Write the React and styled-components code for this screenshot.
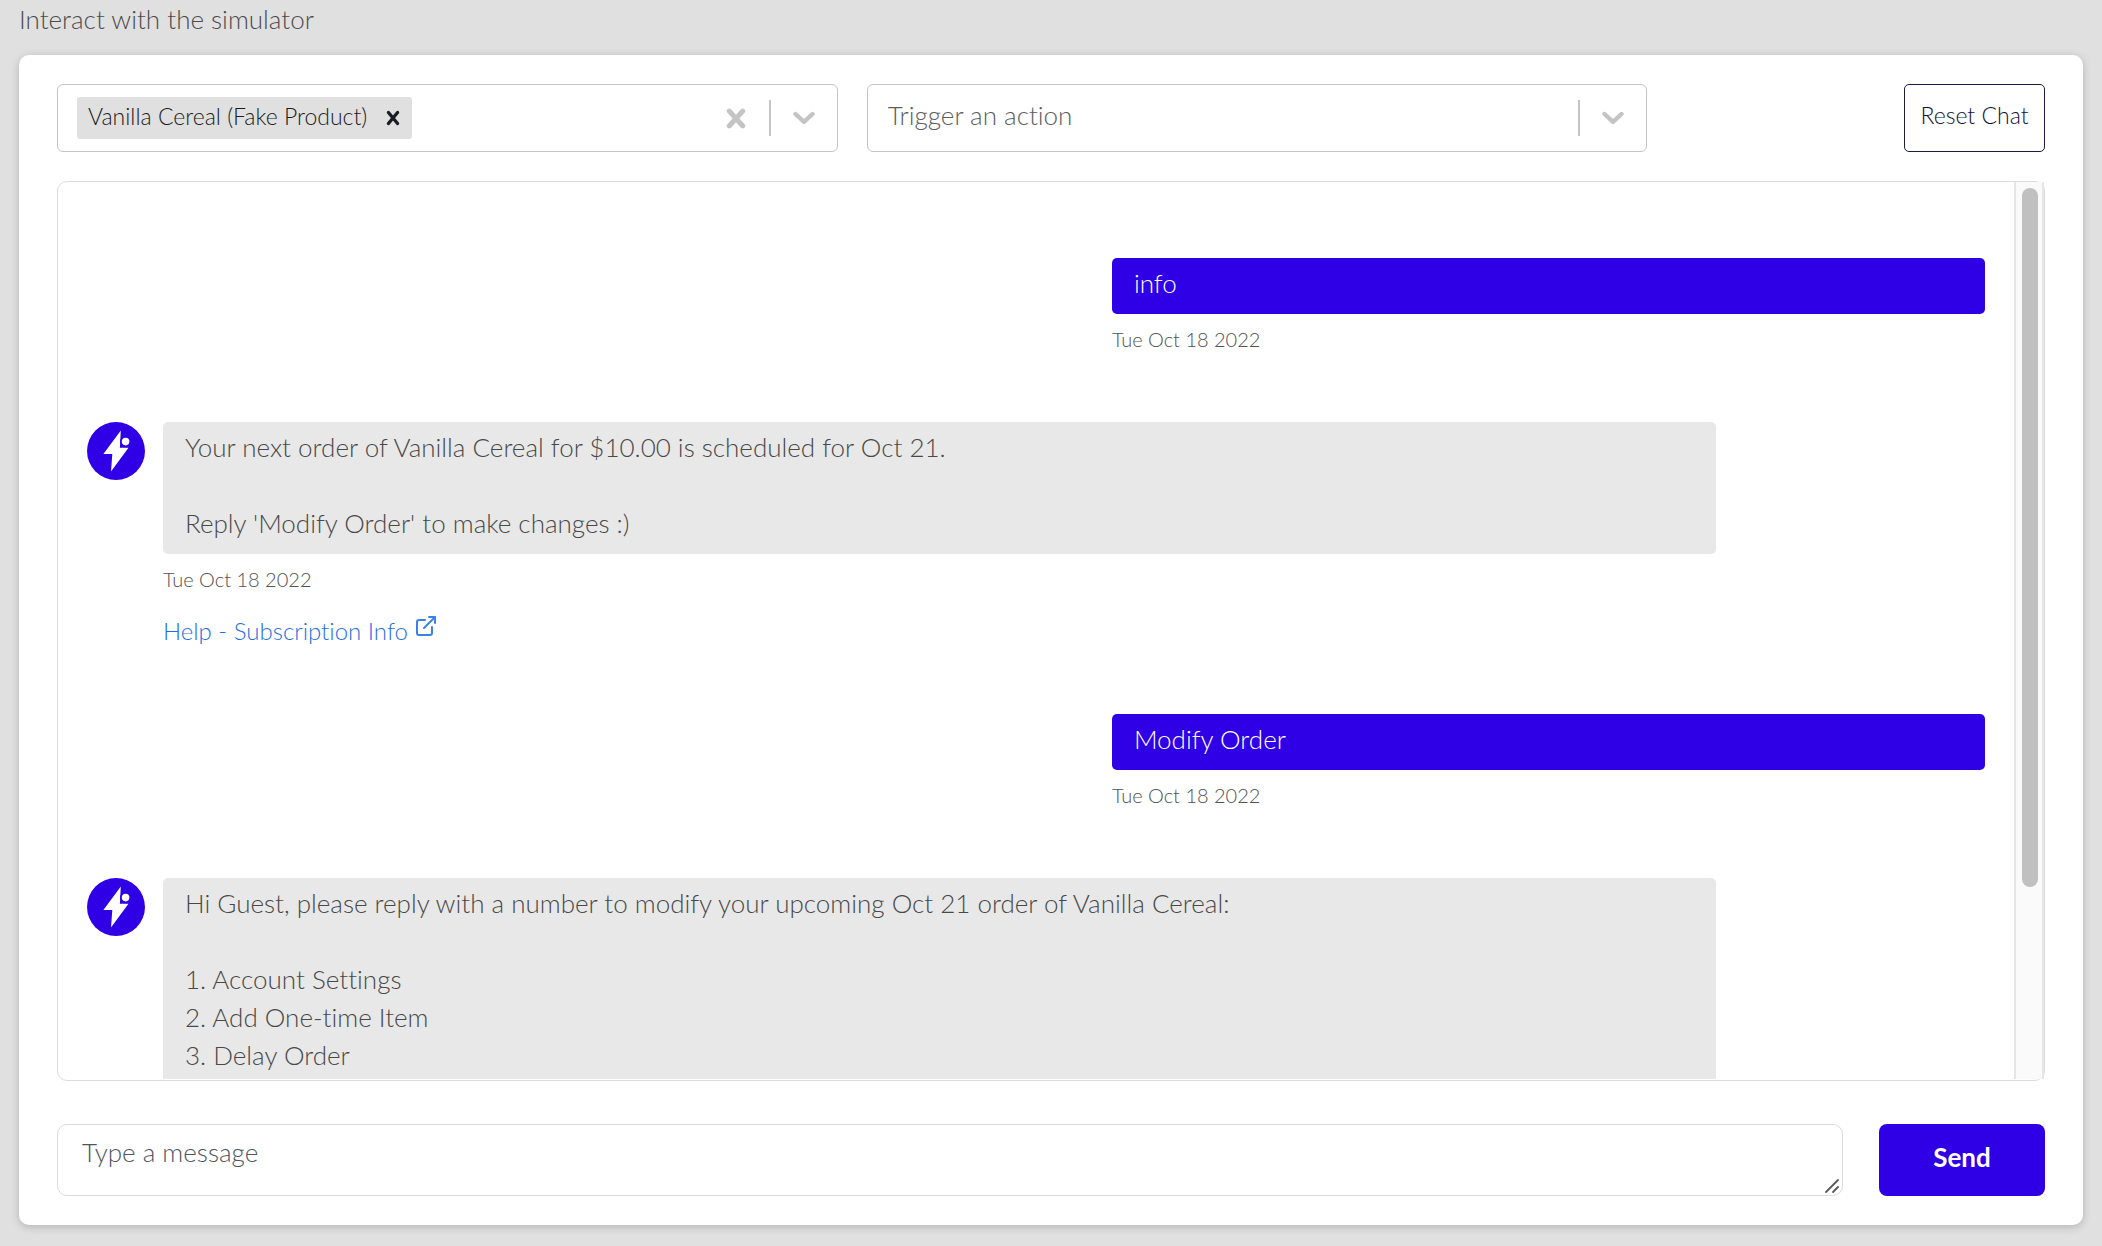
import React from 'react';
import styled, { createGlobalStyle } from 'styled-components';
import { ExternalLink } from 'lucide-react';

const brand = '#2f00e6';
const line = '#dcdce0';
const control = '#c4c4c4';

const GlobalStyle = createGlobalStyle`
  *, *::before, *::after { box-sizing: border-box; }
  body {
    margin: 0;
    background: #e0e0e0;
    color: #484848;
    font: 300 26px/38px Lato, "Open Sans", sans-serif;
    font-variant-ligatures: none;
  }
  button, input, select, textarea { font: inherit; color: inherit; margin: 0; }
`;

const Page = styled.main`
  display: flex;
  flex-direction: column;
  height: 100vh;
  min-height: 640px;
  padding: 0 19px 21px;
`;

const Title = styled.h1`
  margin: 0 0 17px;
  font-size: 26px;
  font-weight: 300;
  color: #4c4c4c;
`;

const Card = styled.section`
  display: flex;
  flex: 1;
  flex-direction: column;
  min-height: 0;
  padding: 29px 38px;
  border-radius: 10px;
  background: #fff;
  box-shadow: 0 2px 8px rgba(0, 0, 0, 0.2);
`;

const Toolbar = styled.div`
  display: flex;
  justify-content: space-between;
  height: 68px;
  margin-bottom: 29px;
`;

const Filters = styled.div`
  display: grid;
  grid-template-columns: 1fr 1fr;
  gap: 29px;
  width: 80%;
`;

const Picker = styled.div`
  display: flex;
  align-items: center;
  border: 1px solid ${control};
  border-radius: 6px;
  background: #fff;
`;

const Tag = styled.span`
  display: flex;
  align-items: center;
  height: 42px;
  margin-left: 19px;
  padding-left: 11px;
  border-radius: 3px;
  background: #e0e0e0;
  color: #1c1c1c;
  font-size: 23px;
`;

const TagText = styled.span`
  padding: 0 6px 4px 0;
`;

const IconButton = styled.button`
  display: flex;
  align-items: center;
  justify-content: center;
  width: ${(p) => (p.$small ? 39 : 66)}px;
  height: 42px;
  padding: 0;
  border: 0;
  background: none;
  color: ${(p) => (p.$small ? '#1c1c24' : control)};
`;

const SearchInput = styled.input`
  flex: 1;
  min-width: 0;
  border: 0;
  outline: 0;
  background: none;
`;

const Separator = styled.span`
  width: 2px;
  height: 36px;
  background: ${control};
`;

const ActionSelect = styled.select`
  flex: 1;
  min-width: 0;
  height: 100%;
  padding: 0 20px 6px;
  border: 0;
  outline: 0;
  appearance: none;
  background: none;
  color: #5c5c5c;
`;

const ResetButton = styled.button`
  width: 141px;
  padding: 0 0 6px;
  border: 1px solid #1d1b42;
  border-radius: 5px;
  background: #fff;
  color: #12103a;
  font-size: 23px;
`;

const Chat = styled.div`
  display: flex;
  flex: 1;
  min-height: 0;
  margin-bottom: 43px;
  padding-bottom: 1px;
  border: 1px solid ${line};
  border-radius: 10px;
`;

const Messages = styled.div`
  flex: 1;
  padding: 76px 29px 64px;
  overflow-y: auto;
  scrollbar-width: none;
`;

const ScrollTrack = styled.div`
  width: 30px;
  padding: 6px;
  border: solid #e6e6e6;
  border-width: 0 2px;
  background: #fafafa;
`;

const ScrollThumb = styled.div`
  width: 16px;
  height: 79%;
  border-radius: 8px;
  background: #c0c0c0;
`;

const UserRow = styled.article`
  width: 46%;
  margin: 0 0 64px auto;
`;

const BotRow = styled.article`
  display: flex;
  gap: 18px;
  margin-bottom: 64px;
  padding-right: 269px;
`;

const BotBody = styled.div`
  flex: 1;
  min-width: 0;
`;

const Bubble = styled.div`
  min-height: 56px;
  padding: 6px 22px 12px;
  border-radius: 5px;
  background: ${(p) => (p.$user ? brand : '#e8e8e8')};
  color: ${(p) => (p.$user ? '#fff' : '#484848')};
  white-space: pre-line;
`;

const Stamp = styled.time`
  display: block;
  margin-top: 6px;
  color: #525252;
  font-size: 20px;
`;

const HelpLink = styled.a`
  display: inline-flex;
  align-items: flex-start;
  gap: 6px;
  margin-top: 14px;
  color: #1f6fe0;
  font-size: 24px;
  text-decoration: none;
  vertical-align: top;

  svg { margin-top: 2px; color: #3b82e6; }
`;

const Composer = styled.form`
  display: flex;
  gap: 36px;
  height: 72px;
`;

const Field = styled.div`
  position: relative;
  flex: 1;
  min-width: 0;
`;

const MessageInput = styled.textarea`
  display: block;
  width: 100%;
  height: 72px;
  padding: 8px 24px;
  border: 1px solid ${line};
  border-radius: 10px;
  outline: 0;
  resize: none;
  overflow: hidden;
  background: #fff;
  &::placeholder { color: #4d5561; }
`;

const Grip = styled.svg`
  position: absolute;
  right: 3px;
  bottom: 2px;
  pointer-events: none;
`;

const SendButton = styled.button`
  width: 166px;
  padding: 0 0 6px;
  border: 0;
  border-radius: 8px;
  background: ${brand};
  color: #fff;
  font-weight: 700;
`;

const Cross = ({ width, height, weight }) => (
  <svg width={width} height={height} viewBox="0 0 18 20" preserveAspectRatio="none" aria-hidden="true">
    <path d="M3 3 15 17M15 3 3 17" stroke="currentColor" strokeWidth={weight} strokeLinecap="round" />
  </svg>
);

const Chevron = () => (
  <svg width="22" height="14" viewBox="0 0 22 14" fill="none" aria-hidden="true">
    <path d="M2.5 3 11 10.8 19.5 3" stroke="currentColor" strokeWidth="4.4" strokeLinecap="round" strokeLinejoin="round" />
  </svg>
);

const ChevronCell = styled.span`
  display: flex;
  justify-content: center;
  width: 66px;
  color: ${control};
`;

const Avatar = () => (
  <svg width="58" height="58" viewBox="0 0 58 58" role="img" aria-label="Bot">
    <circle cx="29" cy="29" r="29" fill={brand} />
    <path d="M33.8 8.6 16.4 32h8.9L24 49.4 41.5 25.8h-8.6Z" fill="#fff" />
    <circle cx="38.6" cy="19.6" r="5.6" fill={brand} />
    <circle cx="38.6" cy="19.6" r="3.8" fill="#fff" />
  </svg>
);

const messages = [
  { from: 'user', text: 'info' },
  {
    from: 'bot',
    text: "Your next order of Vanilla Cereal for $10.00 is scheduled for Oct 21.\n\nReply 'Modify Order' to make changes :)",
    link: 'Help - Subscription Info',
  },
  { from: 'user', text: 'Modify Order' },
  {
    from: 'bot',
    text: 'Hi Guest, please reply with a number to modify your upcoming Oct 21 order of Vanilla Cereal:\n\n1. Account Settings\n2. Add One-time Item\n3. Delay Order',
    open: true,
  },
];

function Message({ from, text, link, open }) {
  const content = (
    <>
      <Bubble $user={from === 'user'}>{text}</Bubble>
      {!open && <Stamp dateTime="2022-10-18">Tue Oct 18 2022</Stamp>}
      {link && (
        <HelpLink href="#help">
          {link}
          <ExternalLink size={24} strokeWidth={2} aria-hidden="true" />
        </HelpLink>
      )}
    </>
  );
  if (from === 'user') return <UserRow>{content}</UserRow>;
  return (
    <BotRow>
      <Avatar />
      <BotBody>{content}</BotBody>
    </BotRow>
  );
}

export default function App() {
  return (
    <>
      <GlobalStyle />
      <Page>
        <Title>Interact with the simulator</Title>
        <Card>
          <Toolbar>
            <Filters>
              <Picker>
                <Tag>
                  <TagText>Vanilla Cereal (Fake Product)</TagText>
                  <IconButton $small type="button" aria-label="Remove product">
                    <Cross width={14} height={16} weight={4} />
                  </IconButton>
                </Tag>
                <SearchInput aria-label="Products" />
                <IconButton type="button" aria-label="Clear products">
                  <Cross width={20} height={21} weight={4.6} />
                </IconButton>
                <Separator />
                <IconButton type="button" aria-label="Open products">
                  <Chevron />
                </IconButton>
              </Picker>
              <Picker>
                <ActionSelect aria-label="Trigger an action" defaultValue="">
                  <option value="">Trigger an action</option>
                </ActionSelect>
                <Separator />
                <ChevronCell>
                  <Chevron />
                </ChevronCell>
              </Picker>
            </Filters>
            <ResetButton type="button">Reset Chat</ResetButton>
          </Toolbar>
          <Chat>
            <Messages>
              {messages.map((m) => (
                <Message key={m.text} {...m} />
              ))}
            </Messages>
            <ScrollTrack>
              <ScrollThumb />
            </ScrollTrack>
          </Chat>
          <Composer onSubmit={(e) => e.preventDefault()}>
            <Field>
              <MessageInput aria-label="Message" placeholder="Type a message" />
              <Grip width="16" height="16" viewBox="0 0 16 16" aria-hidden="true">
                <path d="M2 14 14 2M9 14l5-5" stroke="#5a5a5a" strokeWidth="1.8" strokeLinecap="round" />
              </Grip>
            </Field>
            <SendButton type="submit">Send</SendButton>
          </Composer>
        </Card>
      </Page>
    </>
  );
}
